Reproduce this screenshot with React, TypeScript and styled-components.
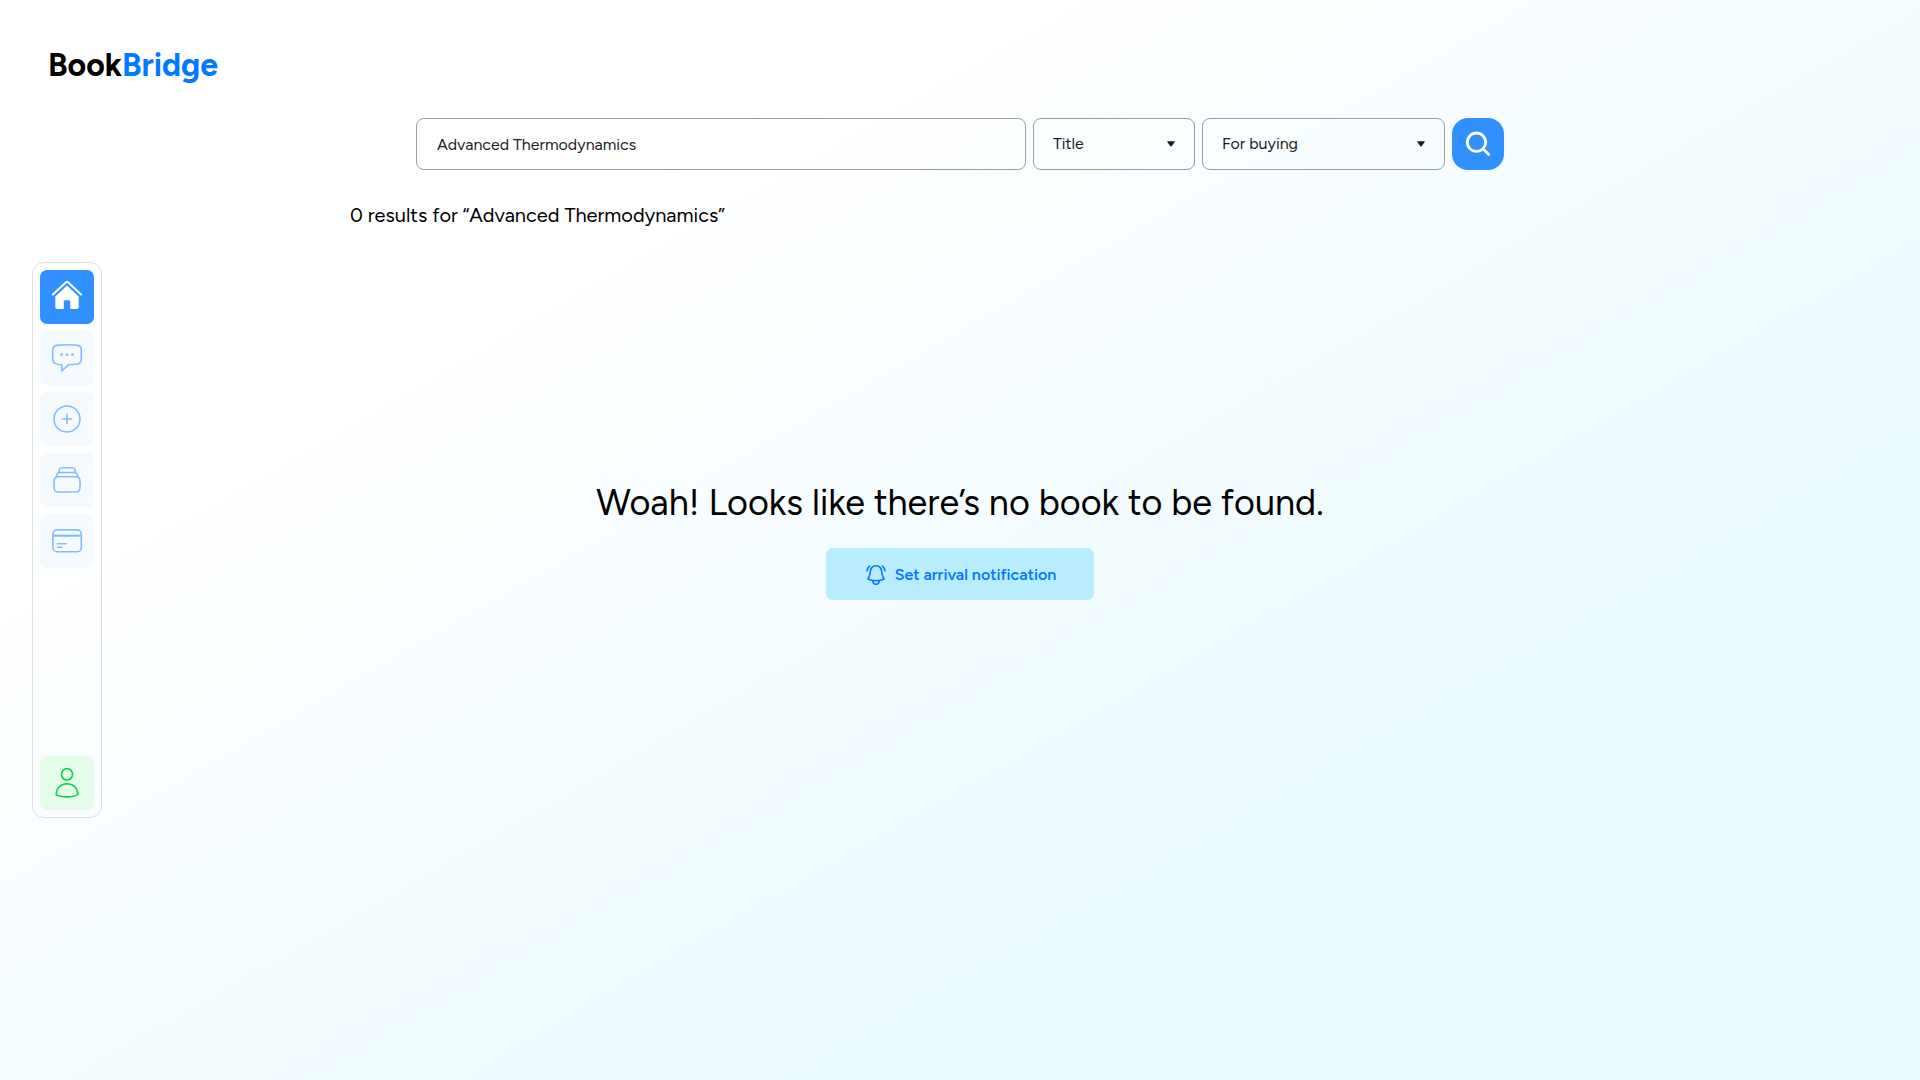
import React, { useState } from "react";
import styled, { createGlobalStyle } from "styled-components";

const GlobalStyle = createGlobalStyle`
  * { box-sizing: border-box; }
  body {
    margin: 0;
    color: #000;
    font-family: Figtree, Inter, sans-serif;
    font-size: 16px;
    line-height: 24px;
  }
  button, input, select { font: inherit; color: inherit; margin: 0; }
`;

const Page = styled.div`
  min-height: 100vh;
  display: grid;
  grid-template-columns: auto minmax(0, 1fr);
  grid-template-rows: minmax(max-content, 1fr) auto 1fr;
  background: linear-gradient(150deg, #ffffff 25%, #ebfaff 71%);
`;

const Top = styled.div`
  grid-column: 1 / -1;
  grid-row: 1;
  display: flex;
  flex-direction: column;
  align-items: center;
  gap: 33px;
  padding: 45px 48px 33px;
`;

const Logo = styled.a`
  align-self: flex-start;
  color: #000;
  font-size: 32px;
  font-weight: 700;
  line-height: 40px;
  text-decoration: none;
`;

const LogoAccent = styled.span`
  color: #007aff;
`;

const SearchForm = styled.form`
  display: flex;
  gap: 7px;
  width: 100%;
  max-width: 1088px;
  height: 52px;
`;

const SearchInput = styled.input`
  flex: 1;
  min-width: 0;
  padding: 1px 20px 0;
  color: #1d1d1f;
  background: transparent;
  border: 1px solid #9a9c9e;
  border-radius: 8px;
`;

const SelectBox = styled.div<{ $width: number }>`
  display: grid;
  align-items: center;
  width: ${(p) => p.$width}px;
`;

const Select = styled.select`
  grid-area: 1 / 1;
  width: 100%;
  height: 52px;
  padding: 0 32px 0 19px;
  color: #1d1d1f;
  background: transparent;
  border: 1px solid #9a9c9e;
  border-radius: 8px;
  appearance: none;
`;

const Caret = styled.svg`
  grid-area: 1 / 1;
  justify-self: end;
  width: 8px;
  height: 6px;
  margin-right: 20px;
  pointer-events: none;
  fill: #1d1d1f;
`;

const SearchButton = styled.button`
  width: 52px;
  height: 52px;
  padding: 0;
  border: 0;
  border-radius: 16px;
  background: #3090ff;
  cursor: pointer;
`;

const Results = styled.p`
  width: 100%;
  max-width: 1220px;
  margin: 0;
  font-size: 20px;
`;

const Sidebar = styled.nav`
  grid-column: 1;
  grid-row: 1 / -1;
  align-self: center;
  display: flex;
  flex-direction: column;
  gap: 7px;
  min-height: 556px;
  margin-left: 32px;
  padding: 7px;
  background: rgba(255, 255, 255, 0.2);
  border: 1px solid #dcdedf;
  border-radius: 12px;
`;

const tones = {
  active: { back: "#3090ff", ink: "#ffffff" },
  idle: { back: "#f5faff", ink: "#84bcff" },
  profile: { back: "#e4fde8", ink: "#0bd044" },
};

const NavLink = styled.a<{ $tone: keyof typeof tones }>`
  display: block;
  width: 54px;
  height: 54px;
  border-radius: 7px;
  background: ${(p) => tones[p.$tone].back};
  color: ${(p) => tones[p.$tone].ink};
  ${(p) => p.$tone === "profile" && "margin-top: auto;"}
`;

const Icon = styled.svg`
  display: block;
  fill: none;
  stroke: currentColor;
  stroke-width: 1.6;
  stroke-linecap: round;
  stroke-linejoin: round;
`;

const SearchIcon = styled(Icon)`
  color: #fff;
  stroke-width: 2.8;
`;

const Empty = styled.main`
  grid-column: 1 / -1;
  grid-row: 2;
  justify-self: center;
  display: flex;
  flex-direction: column;
  align-items: center;
  gap: 22px;
`;

const Heading = styled.h1`
  margin: 0;
  font-size: 36px;
  font-weight: 400;
  line-height: 46px;
  text-align: center;
`;

const NotifyButton = styled.button`
  display: flex;
  align-items: center;
  justify-content: center;
  gap: 9px;
  min-width: 268px;
  height: 52px;
  padding: 1px 31px 0 33px;
  border: 0;
  border-radius: 7px;
  background: #b8edff;
  color: #007aff;
  font-weight: 600;
  cursor: pointer;
`;

const HomeIcon = () => (
  <Icon width="54" height="54" viewBox="0 0 54 54" aria-hidden="true">
    <path d="M12.900 24.600 26 12.300Q27 11.400 28 12.300L41.100 24.600" strokeWidth="2" />
    <path
      d="M27 15.600 38.700 26.400V37a2 2 0 0 1-2 2H30.200V31.400a1.200 1.200 0 0 0-1.200-1.200H25a1.200 1.200 0 0 0-1.200 1.200V39H17.300a2 2 0 0 1-2-2V26.400Z"
      fill="currentColor"
      stroke="none"
    />
  </Icon>
);

const ChatIcon = () => (
  <Icon width="54" height="54" viewBox="0 0 54 54" aria-hidden="true">
    <path d="M27 13.800C31.500 13.800 35 14 37.500 14.400C40 14.800 41.300 16.500 41.300 19V28C41.300 30.700 40 32.500 37.500 33C35 33.400 31 33.700 28.500 33.800L21.900 40V33.700C19.500 33.600 18 33.400 16.500 33C14 32.500 12.700 30.700 12.700 28V19C12.700 16.500 14 14.800 16.500 14.400C19 14 22.500 13.800 27 13.800Z" />
    <g fill="currentColor" stroke="none">
      <circle cx="21.500" cy="23.700" r="1.400" />
      <circle cx="27" cy="23.700" r="1.400" />
      <circle cx="32.500" cy="23.700" r="1.400" />
    </g>
  </Icon>
);

const AddIcon = () => (
  <Icon width="54" height="54" viewBox="0 0 54 54" aria-hidden="true">
    <circle cx="27" cy="27" r="13" />
    <path d="M27 22.300V31.700M22.300 27H31.700" />
  </Icon>
);

const ShelfIcon = () => (
  <Icon width="54" height="54" viewBox="0 0 54 54" aria-hidden="true">
    <path d="M18.200 23.700H35.900Q39.500 23.700 39.900 27.200Q40.500 31 39.900 35.500Q39.500 39 35.900 39H18.200Q14.600 39 14.200 35.500Q13.600 31 14.200 27.200Q14.600 23.700 18.200 23.700Z" />
    <path d="M16.300 24.200 16.900 21.600Q17.500 19.500 19.500 19.500H34.700Q36.700 19.500 37.300 21.600L37.900 24.200" />
    <path d="M18.600 19.500 19.300 16.800Q19.900 14.800 21.900 14.800H32.300Q34.300 14.800 34.900 16.800L35.600 19.500" />
  </Icon>
);

const CardIcon = () => (
  <Icon width="54" height="54" viewBox="0 0 54 54" aria-hidden="true">
    <rect x="12.900" y="15.900" width="28.400" height="21.800" rx="4" />
    <path d="M13 21.700H41" strokeWidth="2.200" strokeLinecap="butt" />
    <path d="M17.500 29.700H26.200M17.500 33.200H21.800" />
  </Icon>
);

const ProfileIcon = () => (
  <Icon width="54" height="54" viewBox="0 0 54 54" aria-hidden="true">
    <ellipse cx="27" cy="18.300" rx="5.500" ry="5.700" />
    <path d="M16.200 38.600C16.200 32 21 27.800 27 27.800S37.800 32 37.800 38.600C35 40.200 31 40.900 27 40.900S19 40.200 16.200 38.600Z" />
  </Icon>
);

const BellIcon = () => (
  <Icon width="20" height="20" viewBox="0 0 20 20" aria-hidden="true">
    <path d="M10 .8C6.600 .8 4.400 3.200 4.400 6.200C4.400 9.400 3.700 11.200 1.900 14.100C4.300 15.200 7 15.700 10 15.700S15.700 15.200 18.100 14.100C16.300 11.200 15.600 9.400 15.600 6.200C15.600 3.200 13.400 .8 10 .8Z" />
    <path d="M6.700 15.800C7 18 8.300 19.200 10 19.200S13 18 13.300 15.800M1 5.800C1.300 3.800 2.200 2.200 3.600 1.100M19 5.800C18.700 3.800 17.800 2.200 16.400 1.100" />
  </Icon>
);

const links = [
  { label: "Home", tone: "active", icon: <HomeIcon /> },
  { label: "Messages", tone: "idle", icon: <ChatIcon /> },
  { label: "Add a book", tone: "idle", icon: <AddIcon /> },
  { label: "My books", tone: "idle", icon: <ShelfIcon /> },
  { label: "Payments", tone: "idle", icon: <CardIcon /> },
  { label: "Profile", tone: "profile", icon: <ProfileIcon /> },
] as const;

function Dropdown({ label, width, options }: { label: string; width: number; options: string[] }) {
  return (
    <SelectBox $width={width}>
      <Select aria-label={label}>
        {options.map((o) => (
          <option key={o}>{o}</option>
        ))}
      </Select>
      <Caret viewBox="0 0 8 6" aria-hidden="true">
        <path d="M.6 .3H7.400Q8.200 .4 7.700 1.100L4.600 5.300Q4 5.900 3.400 5.300L.3 1.100Q-.2 .4 .6 .3Z" />
      </Caret>
    </SelectBox>
  );
}

export default function App() {
  const [query, setQuery] = useState("Advanced Thermodynamics");
  return (
    <>
      <GlobalStyle />
      <Page>
        <Top>
          <Logo href="#">
            Book<LogoAccent>Bridge</LogoAccent>
          </Logo>
          <SearchForm role="search" onSubmit={(e) => e.preventDefault()}>
            <SearchInput
              type="text"
              aria-label="Search books"
              value={query}
              onChange={(e) => setQuery(e.target.value)}
            />
            <Dropdown label="Search by" width={162} options={["Title", "Author"]} />
            <Dropdown label="Offer type" width={243} options={["For buying", "For renting"]} />
            <SearchButton type="submit" aria-label="Search">
              <SearchIcon width="52" height="52" viewBox="0 0 52 52" aria-hidden="true">
                <circle cx="24.500" cy="24.200" r="9.200" />
                <path d="M31.200 30.900 36.800 36.600" />
              </SearchIcon>
            </SearchButton>
          </SearchForm>
          <Results>0 results for “Advanced Thermodynamics”</Results>
        </Top>
        <Sidebar aria-label="Main">
          {links.map((l) => (
            <NavLink key={l.label} href="#" aria-label={l.label} $tone={l.tone}>
              {l.icon}
            </NavLink>
          ))}
        </Sidebar>
        <Empty>
          <Heading>Woah! Looks like there’s no book to be found.</Heading>
          <NotifyButton type="button">
            <BellIcon />
            Set arrival notification
          </NotifyButton>
        </Empty>
      </Page>
    </>
  );
}
